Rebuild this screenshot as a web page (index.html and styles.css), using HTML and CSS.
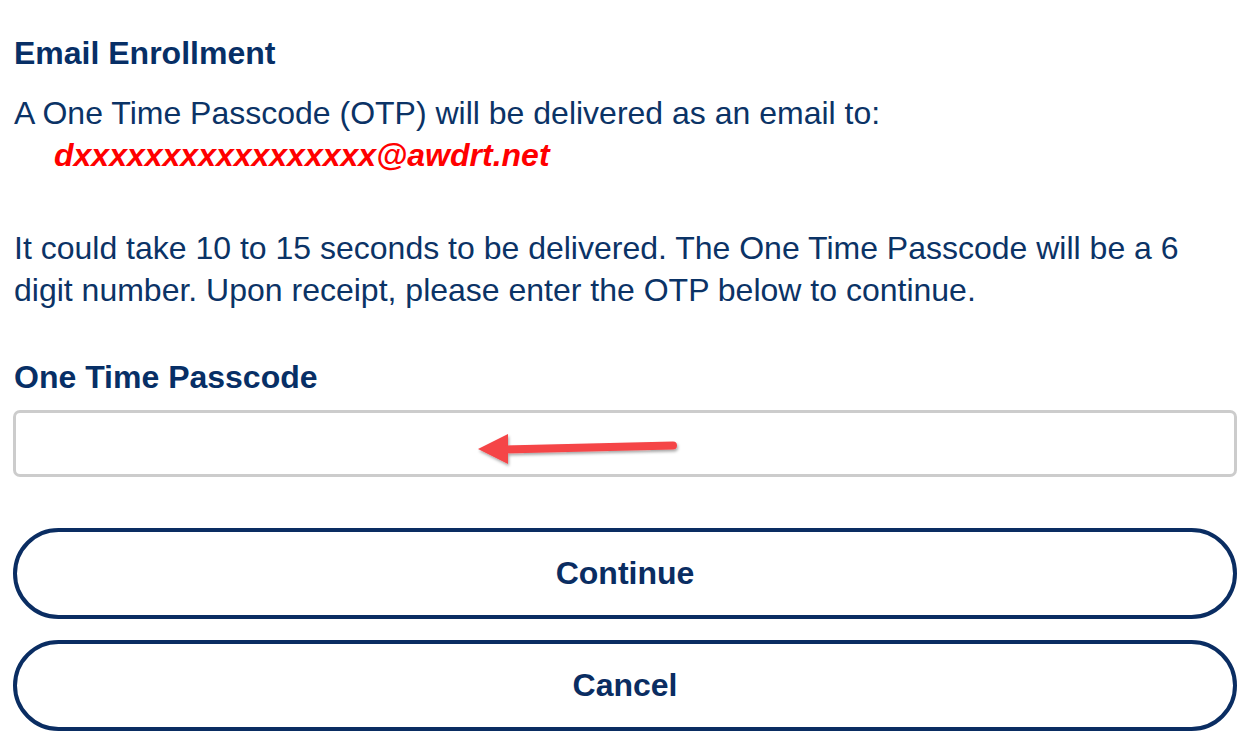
FILE: index.html
```html
<!DOCTYPE html>
<html lang="en">
  <head>
    <meta charset="UTF-8" />
    <meta name="viewport" content="width=device-width, initial-scale=1.0" />
    <title>Email Enrollment</title>
    <link rel="stylesheet" href="styles.css">
  </head>
  <body>
    <div class="container">
      <h1>Email Enrollment</h1>

      <p class="intro">A One Time Passcode (OTP) will be delivered as an email to:</p>
      <p class="email">dxxxxxxxxxxxxxxxxx@awdrt.net</p>

      <p class="note">
        It could take 10 to 15 seconds to be delivered. The One Time Passcode will be a 6
        digit number. Upon receipt, please enter the OTP below to continue.
      </p>

      <form id="otpForm">
        <label for="otp">One Time Passcode</label>
        <div class="input-wrap">
          <input type="text" id="otp" name="otp" inputmode="numeric" maxlength="6" autocomplete="one-time-code" />
          <!-- annotation arrow pointing at the field -->
          <svg class="arrow" width="220" height="44" viewBox="0 0 220 44">
            <defs>
              <filter id="shadow" x="-10%" y="-40%" width="120%" height="200%">
                <feDropShadow dx="1" dy="2" stdDeviation="1.5" flood-color="#000" flood-opacity="0.35" />
              </filter>
            </defs>
            <g filter="url(#shadow)" fill="#f54447">
              <path d="M4 24 L34 9 L34 39 Z" />
              <path d="M30 20.5 L199 16.5 A4 4 0 0 1 199 24.5 L30 28.5 Z" />
            </g>
          </svg>
        </div>

        <button type="submit" class="btn">Continue</button>
        <button type="button" class="btn">Cancel</button>
      </form>
    </div>
  </body>
</html>
```

FILE: styles.css
```css
* {
  margin: 0;
  padding: 0;
  box-sizing: border-box;
}

body {
  font-family: "Liberation Sans", Arial, sans-serif;
  font-size: 32px;
  line-height: 42px;
  color: #0b3366;
  background: #fff;
}

.container {
  padding: 32px 12px 0 13px;
}

h1 {
  font-size: 32px;
  font-weight: bold;
  color: #072f66;
  padding-left: 1px;
}

.intro {
  margin-top: 18px;
  padding-left: 1px;
}

.email {
  padding-left: 41px;
  font-weight: bold;
  font-style: italic;
  color: #ff0000;
}

.note {
  margin-top: 51px;
  padding-left: 1px;
}

label {
  display: block;
  margin-top: 45px;
  padding-left: 1px;
  font-weight: bold;
  color: #072f66;
}

.input-wrap {
  position: relative;
  margin-top: 12px;
}

input[type="text"] {
  display: block;
  width: 100%;
  height: 67px;
  border: 3px solid #cccccc;
  border-radius: 7px;
  padding: 0 16px;
  font-size: 32px;
  font-family: inherit;
  color: #0b3366;
  background: #fff;
}

input[type="text"]:focus {
  outline: none;
  border-color: #9bb0cc;
}

.arrow {
  position: absolute;
  left: 461px;
  top: 15px;
  pointer-events: none;
}

.btn {
  display: block;
  width: 100%;
  height: 91px;
  margin-top: 21px;
  border: 4px solid #0a2d62;
  border-radius: 46px;
  background: #fff;
  color: #0a2d62;
  font-family: inherit;
  font-size: 32px;
  font-weight: bold;
  cursor: pointer;
}

.btn:first-of-type {
  margin-top: 51px;
}

.btn:hover {
  background: #f2f5fa;
}
```
